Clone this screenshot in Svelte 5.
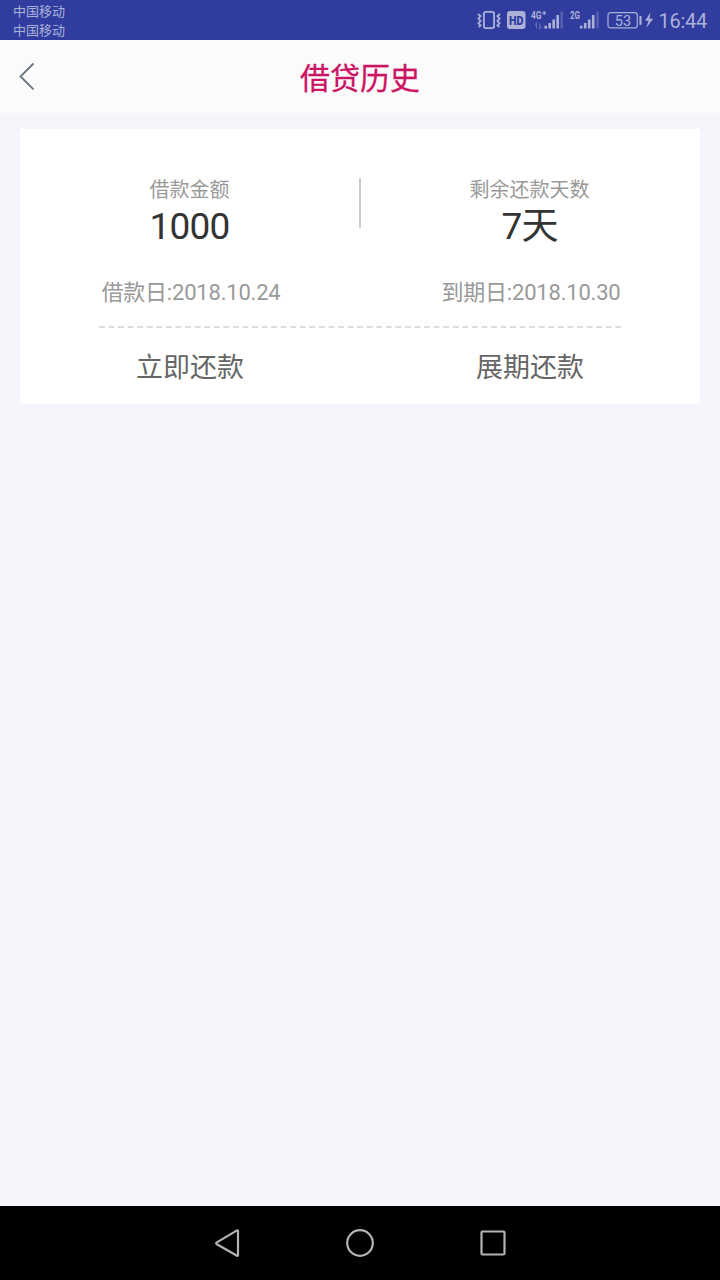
<script>
  const carriers = ["中国移动", "中国移动"];

  const columns = [
    {
      label: "借款金额",
      value: "1000",
      date: "借款日:2018.10.24",
      action: "立即还款",
    },
    {
      label: "剩余还款天数",
      value: "7天",
      date: "到期日:2018.10.30",
      action: "展期还款",
    },
  ];
</script>

<div class="screen">
  <!-- System status bar -->
  <div class="status">
    <div class="carriers">
      {#each carriers as name, i (i)}
        <span>{name}</span>
      {/each}
    </div>

    <div class="indicators">
      <svg class="vibrate" width="26" height="20" viewBox="0 0 26 20">
        <rect x="7.9" y="1.9" width="10.2" height="16.2" rx="1.8" />
        <path d="M2 4l2.6 2.2L2.4 8.6l2.2 2.3-2.2 2.3 2.2 2.2-2 1.6" />
        <path d="M24 4l-2.6 2.2 2.2 2.4-2.2 2.3 2.2 2.3-2.2 2.2 2 1.6" />
      </svg>

      <svg class="hd" width="19" height="20" viewBox="0 0 19 20">
        <rect x="0" y="1" width="18.5" height="18" rx="3" />
        <text x="9.2" y="14.8" textLength="14.5" lengthAdjust="spacingAndGlyphs">HD</text>
      </svg>

      <svg class="signal sim-one" width="34" height="24" viewBox="0 -2 34 24">
        <text x="0" y="8.6" textLength="10.5" lengthAdjust="spacingAndGlyphs">4G</text>
        <path d="M11.2 3h4M13.2 1v4" class="plus" />
        <path d="M5.5 18.5v-5.3l-1.4 1.6M8.8 13.2v5.3l1.5-1.8" class="data" />
        <path d="M14.7 18.5v-2.7M18.7 18.5v-5.5M22.7 18.5v-9M26.7 18.5V5" class="bars" />
        <path d="M30.7 18.5V1.5" class="bars off" />
      </svg>

      <svg class="signal sim-two" width="31" height="24" viewBox="0 -2 31 24">
        <text x="0" y="8.6" textLength="10" lengthAdjust="spacingAndGlyphs">2G</text>
        <path d="M11.2 18.5v-2.7M15.2 18.5v-5.5M19.2 18.5v-9M23.2 18.5V5" class="bars" />
        <path d="M27.5 18.5V1.5" class="bars off" />
      </svg>

      <svg class="battery" width="47" height="20" viewBox="0 0 47 20">
        <rect x="1" y="2.7" width="29.3" height="15.2" rx="2.5" />
        <path d="M33.5 6v8.8" class="cap" />
        <text x="16" y="16">53</text>
        <path d="M43.5 2.5l-5.5 8.3h3.6L39.2 18l7-9.2h-3.7z" class="bolt" />
      </svg>

      <span class="time">16:44</span>
    </div>
  </div>

  <header class="header">
    <button class="back" aria-label="返回">
      <svg width="20" height="30" viewBox="0 0 20 30">
        <path d="M15.5 1.5L2.5 14.5l13 12.8" />
      </svg>
    </button>
    <h1>借贷历史</h1>
  </header>

  <main class="content">
    <section class="card">
      <div class="row summary">
        {#each columns as col (col.label)}
          <div class="cell">
            <span class="label">{col.label}</span>
            <span class="value">{col.value}</span>
          </div>
        {/each}
      </div>

      <div class="row dates">
        {#each columns as col (col.date)}
          <span class="date">{col.date}</span>
        {/each}
      </div>

      <svg class="dashes" width="522" height="2" viewBox="0 0 522 2">
        <path d="M0 1h522" />
      </svg>

      <div class="row actions">
        {#each columns as col (col.action)}
          <button class="action">{col.action}</button>
        {/each}
      </div>
    </section>
  </main>

  <!-- System navigation bar -->
  <nav class="navbar">
    <svg width="30" height="30" viewBox="0 0 30 30">
      <path d="M26 2.9v24.3a.7.7 0 0 1-1 .5L4.5 16a.9.9 0 0 1 0-1.4L25 2.4a.7.7 0 0 1 1 .5z" />
    </svg>
    <svg width="30" height="30" viewBox="0 0 30 30">
      <circle cx="15" cy="15" r="12.8" />
    </svg>
    <svg width="30" height="30" viewBox="0 0 30 30">
      <rect x="3.5" y="3.5" width="23" height="23" rx="1" />
    </svg>
  </nav>
</div>

<style>
  :global(body) {
    margin: 0;
  }

  .screen {
    display: flex;
    flex-direction: column;
    width: 720px;
    height: 1280px;
    overflow: hidden;
    background: #f7f5fc;
    font-family: Roboto, "Noto Sans CJK SC", sans-serif;
  }

  button {
    padding: 0;
    border: none;
    background: none;
    font: inherit;
    cursor: pointer;
  }

  svg {
    display: block;
    overflow: visible;
    fill: none;
  }

  /* ── Status bar ── */
  .status {
    display: flex;
    justify-content: space-between;
    box-sizing: border-box;
    height: 40px;
    padding: 0 13px;
    background: #303d9f;
    color: #acb1d9;
  }

  .carriers {
    display: flex;
    flex-direction: column;
    padding-top: 2px;
    font-size: 13px;
    line-height: 19px;
  }

  .indicators {
    display: flex;
    align-items: center;
  }

  .indicators svg {
    stroke: #acb1d9;
  }

  .indicators text {
    fill: #acb1d9;
    stroke: none;
    font-family: Roboto, sans-serif;
  }

  .vibrate {
    margin-right: 5px;
    stroke-width: 1.8;
  }

  .hd {
    margin-right: 5px;
  }

  .hd rect {
    fill: #acb1d9;
    stroke: none;
  }

  .hd text {
    fill: #303d9f;
    font-size: 13px;
    font-weight: 900;
    text-anchor: middle;
  }

  .signal text {
    font-size: 11.5px;
    font-weight: 700;
  }

  .signal .plus {
    stroke-width: 1.2;
  }

  .signal .data {
    stroke-width: 1.2;
    opacity: 0.4;
  }

  .signal .bars {
    stroke-width: 2.6;
  }

  .signal .off {
    opacity: 0.3;
  }

  .sim-one {
    margin-right: 5px;
  }

  .sim-two {
    margin-right: 6px;
  }

  .battery {
    margin-right: 4px;
    stroke-width: 1.2;
  }

  .battery .cap {
    stroke-width: 2.2;
  }

  .battery text {
    font-size: 14.5px;
    text-anchor: middle;
  }

  .battery .bolt {
    fill: #acb1d9;
    stroke: none;
  }

  .time {
    padding-top: 2px;
    font-size: 20px;
    letter-spacing: -0.25px;
    line-height: 40px;
  }

  /* ── Title bar ── */
  .header {
    display: grid;
    grid-template-columns: 60px 1fr 60px;
    align-items: center;
    height: 73px;
    background: #fbfbfb;
  }

  .back {
    padding-left: 18px;
  }

  .back path {
    stroke: #6b7380;
    stroke-width: 1.8;
  }

  h1 {
    margin: 0;
    padding-top: 4px;
    color: #cb1464;
    font-size: 30px;
    font-weight: 400;
    line-height: 44px;
    text-align: center;
    -webkit-text-stroke: 0.3px #cb1464;
  }

  /* ── Loan card ── */
  .content {
    flex: 1;
    padding: 16px 20px;
  }

  .card {
    box-sizing: border-box;
    height: 275px;
    padding-top: 49px;
    background: #fff;
  }

  .row {
    display: grid;
    grid-template-columns: 1fr 1fr;
    text-align: center;
  }

  .cell {
    display: flex;
    flex-direction: column;
  }

  .label {
    padding-right: 1px;
    color: #999;
    font-size: 20px;
    line-height: 24px;
  }

  .value {
    padding-right: 1px;
    color: #333;
    font-size: 37px;
    letter-spacing: -0.8px;
    line-height: 50px;
  }

  .summary {
    background: linear-gradient(#ccc, #ccc) center 0 / 2px 50px no-repeat;
  }

  .date {
    margin-top: 28px;
    padding-left: 2px;
    color: #999;
    font-size: 22px;
    letter-spacing: -0.2px;
    line-height: 26px;
  }

  .dashes {
    margin: 20px auto 0;
  }

  .dashes path {
    stroke: #ddd;
    stroke-width: 2;
    stroke-dasharray: 6 3.56;
  }

  .action {
    margin-top: 21px;
    color: #666;
    font-size: 27px;
    line-height: 38px;
  }

  /* ── Navigation bar ── */
  .navbar {
    display: flex;
    justify-content: center;
    align-items: center;
    gap: 103px;
    height: 74px;
    background: #000;
  }

  .navbar svg {
    stroke: #b4b4b4;
    stroke-width: 2.2;
  }
</style>
